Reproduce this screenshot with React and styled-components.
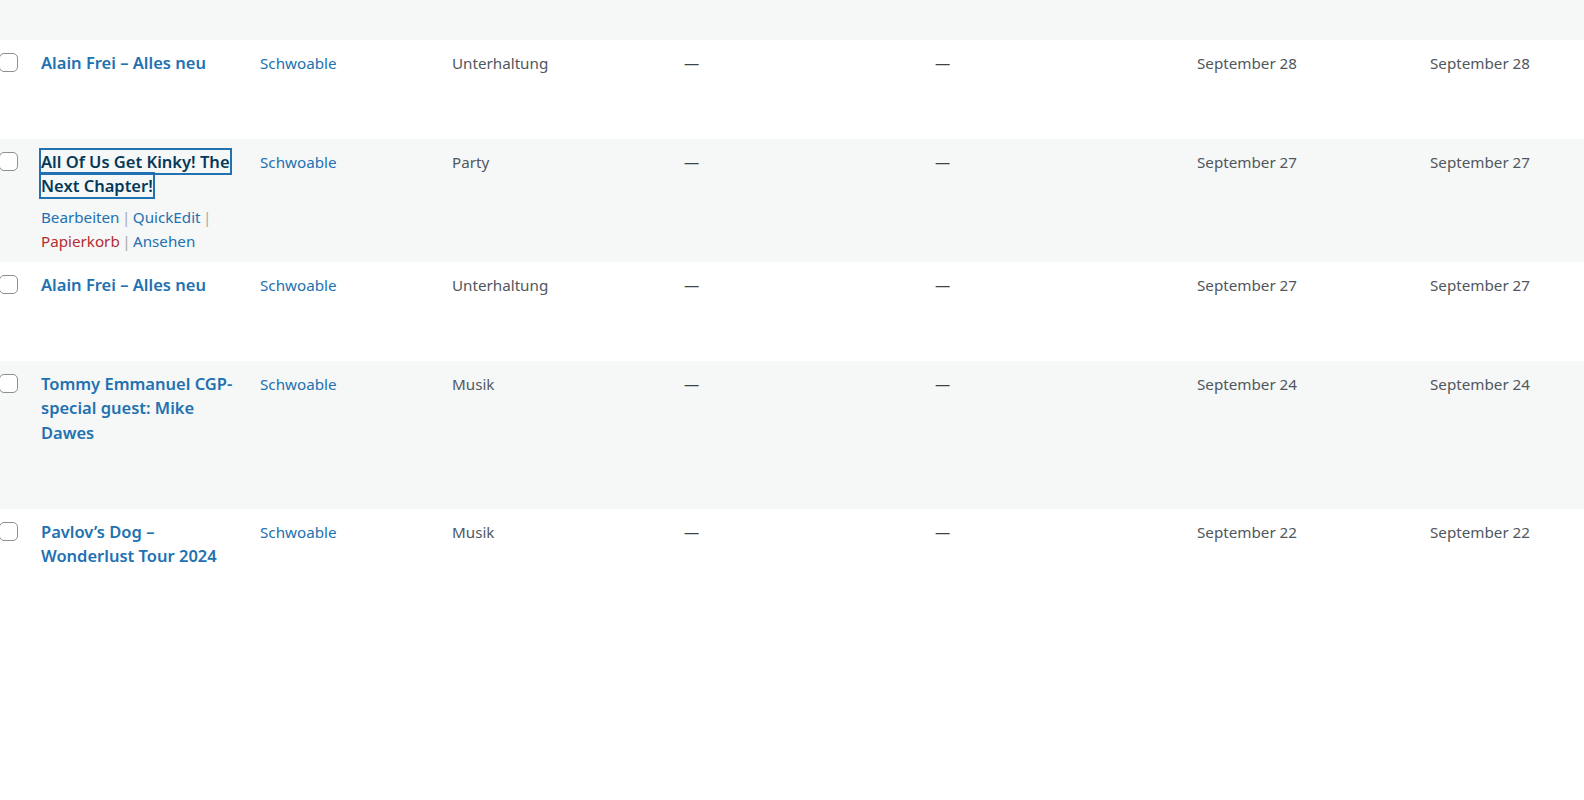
import React from "react";
import styled, { createGlobalStyle } from "styled-components";

const GlobalStyle = createGlobalStyle`
  html, body { margin: 0; padding: 0; background: #fff; }
  body {
    font-family: "Noto Sans", "Open Sans", sans-serif;
    font-size: 15.2px;
    color: #50575e;
  }
`;

const Table = styled.div`
  width: 1584px;
  display: flex;
  flex-direction: column;
`;

const Row = styled.div`
  display: grid;
  grid-template-columns: 31px 219px 192px 232px 251px 262px 233px 1fr;
  height: ${(p) => p.$height}px;
  background: ${(p) => (p.$striped ? "#f6f7f7" : "#ffffff")};
`;

const Cell = styled.div`
  padding: 10.5px 10px 0 10px;
  line-height: 24.4px;
  font-size: 15.2px;
  color: ${(p) => (p.$link ? "#2271b1" : "#50575e")};
  min-width: 0;
`;

const CheckCell = styled.div`
  padding-top: 13px;
`;

const Checkbox = styled.span`
  display: block;
  box-sizing: border-box;
  width: 19px;
  height: 19px;
  margin-left: -1px;
  border: 1px solid #8c8f94;
  border-radius: 5px;
  background: #fff;
`;

const TitleCell = styled.div`
  padding: 10.5px 12px 0 10px;
  min-width: 0;
`;

const TitleText = styled.strong`
  display: block;
  font-size: 16.5px;
  line-height: 24.5px;
  font-weight: 600;
  margin-bottom: 3.5px;
`;

const TitleLink = styled.a`
  color: ${(p) => (p.$focused ? "#043959" : "#2271b1")};
  text-decoration: none;
  ${(p) =>
    p.$focused &&
    `
    box-shadow: 0 0 0 2px #2271b1;
    -webkit-box-decoration-break: clone;
    box-decoration-break: clone;
  `}
`;

const Actions = styled.div`
  padding-top: 2.5px;
  font-size: 15.2px;
  line-height: 24.4px;
  word-spacing: -1.5px;
  color: #a7aaad;
`;

const ActionLink = styled.a`
  color: ${(p) => (p.$danger ? "#b32d2e" : "#2271b1")};
  text-decoration: none;
`;

const Dash = styled.span`
  color: #3c434a;
`;

const rows = [
  { title: "Alain Frei – Alles neu", cat: "Unterhaltung", date: "September 28", h: 99 },
  { title: "All Of Us Get Kinky! The Next Chapter!", cat: "Party", date: "September 27", h: 123, focused: true },
  { title: "Alain Frei – Alles neu", cat: "Unterhaltung", date: "September 27", h: 99 },
  { title: "Tommy Emmanuel CGP-special guest: Mike Dawes", cat: "Musik", date: "September 24", h: 148 },
  { title: "Pavlov’s Dog – Wonderlust Tour 2024", cat: "Musik", date: "September 22", h: 100 },
];

export default function App() {
  return (
    <>
      <GlobalStyle />
      <Table>
        <Row $height={40} $striped />
        {rows.map((r, i) => (
          <Row key={i} $height={r.h} $striped={i % 2 === 1}>
            <CheckCell>
              <Checkbox />
            </CheckCell>
            <TitleCell>
              <TitleText>
                <TitleLink href="#" $focused={r.focused}>
                  {r.title}
                </TitleLink>
              </TitleText>
              {r.focused && (
                <Actions>
                  <ActionLink href="#">Bearbeiten</ActionLink> | <ActionLink href="#">QuickEdit</ActionLink> |{" "}
                  <ActionLink href="#" $danger>
                    Papierkorb
                  </ActionLink>{" "}
                  | <ActionLink href="#">Ansehen</ActionLink>
                </Actions>
              )}
            </TitleCell>
            <Cell $link>Schwoable</Cell>
            <Cell>{r.cat}</Cell>
            <Cell>
              <Dash>—</Dash>
            </Cell>
            <Cell>
              <Dash>—</Dash>
            </Cell>
            <Cell>{r.date}</Cell>
            <Cell>{r.date}</Cell>
          </Row>
        ))}
      </Table>
    </>
  );
}
